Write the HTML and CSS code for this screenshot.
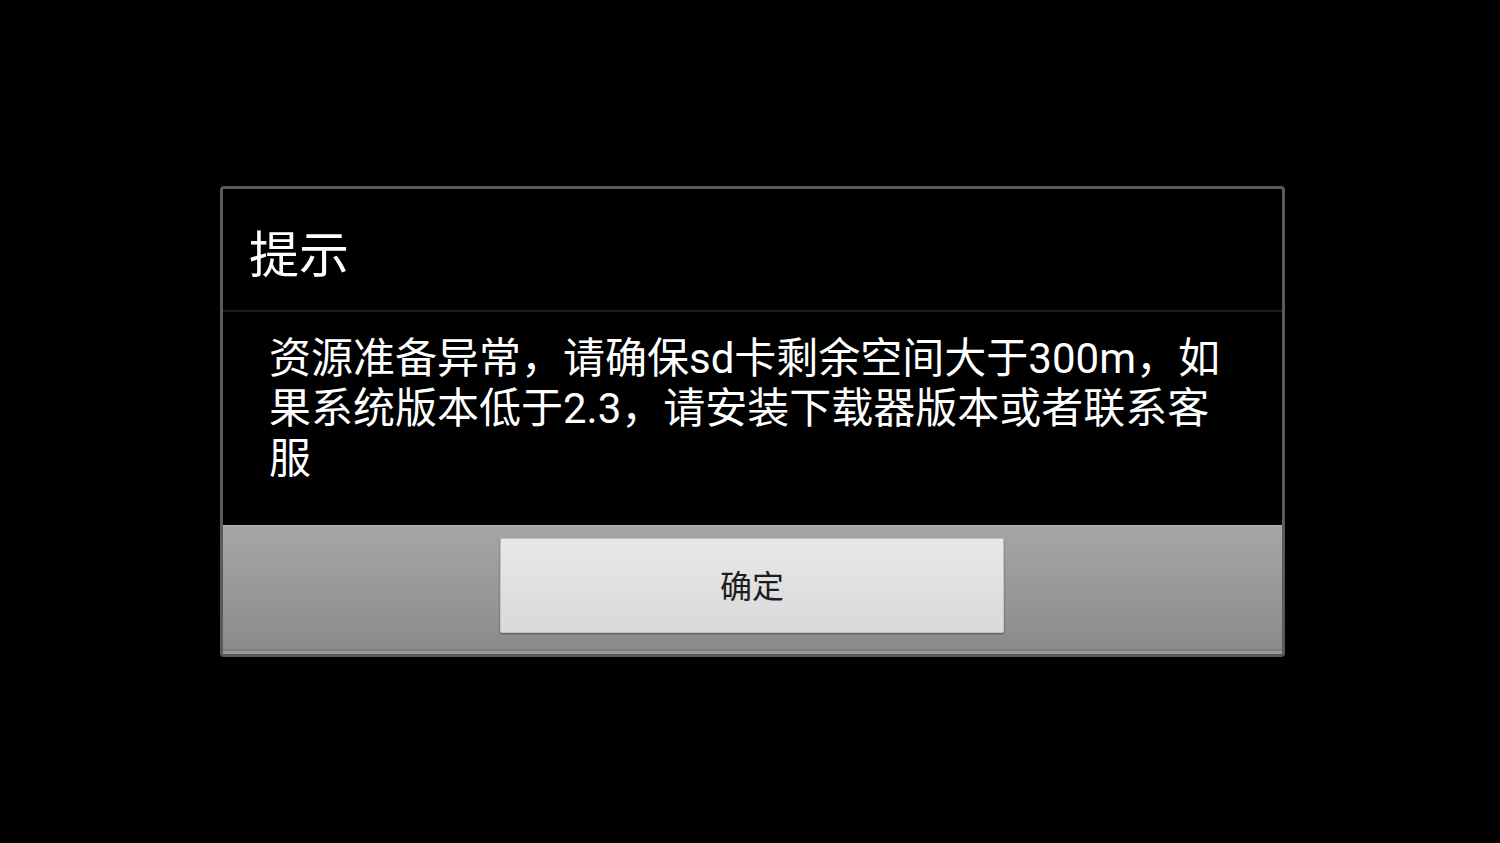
FILE: index.html
```html
<!DOCTYPE html>
<html lang="zh">
<head>
<meta charset="utf-8">
<link rel="stylesheet" href="styles.css">
</head>
<body>
<div class="dialog">
  <div class="title">提示</div>
  <div class="divider"></div>
  <div class="message">资源准备异常，请确保sd卡剩余空间大于300m，如果系统版本低于2.3，请安装下载器版本或者联系客服</div>
  <div class="buttons">
    <button class="btn">确定</button>
  </div>
</div>
</body>
</html>
```
FILE: styles.css
```css
html, body {
  margin: 0;
  padding: 0;
  background: #000;
  width: 1500px;
  height: 843px;
  overflow: hidden;
  font-family: Roboto, "Noto Sans CJK SC", sans-serif;
}
.dialog {
  box-sizing: border-box;
  margin: 186px 0 0 220px;
  width: 1065px;
  height: 471px;
  border: 3px solid #5a5a5a;
  border-radius: 4px;
  background: #000;
  display: flex;
  flex-direction: column;
  overflow: hidden;
}
.title {
  height: 121px;
  display: flex;
  align-items: center;
  padding-left: 26px;
  color: #fff;
  font-size: 50px;
  padding-top: 2px;
  box-sizing: border-box;
}
.divider {
  height: 2px;
  background: #1c1c1c;
}
.message {
  flex: 1;
  padding: 22px 34px 0 46px;
  color: #fff;
  font-size: 42px;
  line-height: 50px;
}
.buttons {
  height: 129px;
  border-top: 1px solid #b4b4b4;
  background: linear-gradient(#a6a6a6, #8a8a8a);
  box-shadow: inset 0 -3px 0 #9a9a9a, inset 0 -5px 0 #7e7e7e;
  display: flex;
  justify-content: center;
  align-items: flex-start;
  padding-top: 12px;
  box-sizing: border-box;
}
.btn {
  box-sizing: border-box;
  width: 504px;
  height: 95px;
  border: 1px solid #c4c4c4;
  border-radius: 2px;
  background: linear-gradient(#e8e8e8, #d9d9d9);
  box-shadow: 0 1px 2px rgba(0,0,0,0.45);
  font-family: Roboto, "Noto Sans CJK SC", sans-serif;
  font-size: 32px;
  color: #1e1e1e;
  padding: 0 0 4px 0;
  margin-right: 1px;
}
```
